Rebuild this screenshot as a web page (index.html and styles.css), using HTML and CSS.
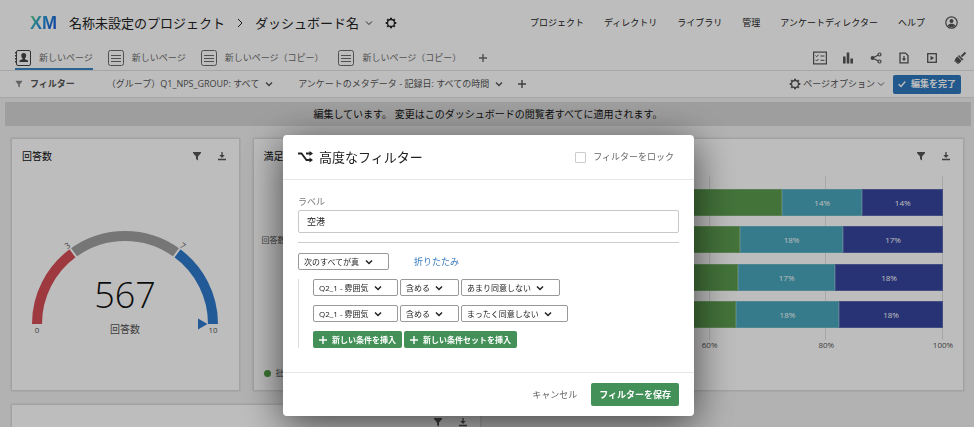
FILE: index.html
```html
<!DOCTYPE html>
<html lang="ja">
<head>
  <meta charset="UTF-8" />
  <meta name="viewport" content="width=device-width, initial-scale=1.0"/>
  <title>ダッシュボード名</title>
  <link rel="stylesheet" href="styles.css">
</head>
<body>
  <!-- shared icons -->
  <svg class="sprite" width="0" height="0">
    <symbol id="chevron" viewBox="0 0 8 8"><path d="M1 2.5l3 3 3-3" fill="none" stroke="currentColor" stroke-width="1.4"/></symbol>
    <symbol id="chevron-thin" viewBox="0 0 8 8"><path d="M1 2.5l3 3 3-3" fill="none" stroke="currentColor" stroke-width=".9"/></symbol>
    <symbol id="plus" viewBox="0 0 8 8"><path d="M4 0v8M0 4h8" stroke="currentColor" stroke-width="1.4"/></symbol>
    <symbol id="funnel" viewBox="0 0 10 10"><path d="M1 1h8v1L6 5.500v4L4 8V5.500L1 2z" fill="currentColor"/></symbol>
    <symbol id="download" viewBox="0 0 10 10"><path d="M5 1v4M1 8.500h8" fill="none" stroke="currentColor" stroke-width="1.3"/><path d="M2.300 4h5.400L5 7z" fill="currentColor"/></symbol>
    <symbol id="page" viewBox="0 0 16 16"><rect x=".5" y=".5" width="15" height="15" rx="2" fill="none" stroke="currentColor"/><path d="M3 5.500h10M3 8.500h10M3 11.500h10" stroke="currentColor"/></symbol>
    <symbol id="gear" viewBox="0 0 12 12">
      <circle cx="6" cy="6" r="3.5" fill="none" stroke="currentColor" stroke-width="1.3"/>
      <path d="M6 .7v1.500M6 9.800v1.500M.7 6h1.500M9.800 6h1.500M2.200 2.200l1.100 1.100M8.700 8.700l1.100 1.100M2.200 9.800l1.100-1.100M8.700 3.300l1.100-1.100" stroke="currentColor" stroke-width="2"/>
    </symbol>
  </svg>

  <header class="topbar">
    <span class="logo">XM</span>
    <span class="crumb">名称未設定のプロジェクト</span>
    <svg class="crumb-sep" viewBox="0 0 6 10"><path d="M1 1l4 4-4 4" fill="none" stroke="currentColor"/></svg>
    <span class="crumb">ダッシュボード名</span>
    <svg class="crumb-arrow icon-small"><use href="#chevron-thin"/></svg>
    <button class="icon-button" aria-label="設定"><svg class="icon-medium"><use href="#gear"/></svg></button>
    <nav class="main-nav">
      <a href="#">プロジェクト</a>
      <a href="#">ディレクトリ</a>
      <a href="#">ライブラリ</a>
      <a href="#">管理</a>
      <a href="#">アンケートディレクター</a>
      <a href="#">ヘルプ</a>
      <a href="#" class="avatar" aria-label="アカウント">
        <svg width="13" height="13" viewBox="0 0 13 13"><circle cx="6.5" cy="6.5" r="5.7" fill="none" stroke="currentColor" stroke-width="1.2"/><circle cx="6.5" cy="5" r="2" fill="currentColor"/><path d="M2.800 9.600c1-2.600 6.400-2.600 7.400 0-1.800 2-5.600 2-7.400 0z" fill="currentColor"/></svg>
      </a>
    </nav>
  </header>

  <div class="tabbar">
    <a href="#" class="tab active">
      <svg class="icon-tab" viewBox="0 0 16 16"><rect x="1.5" y=".5" width="14" height="15" rx="1.5" fill="none" stroke="currentColor"/><path d="M1 2v12" stroke="currentColor" stroke-width="2" stroke-dasharray="1.5 1.5"/><path d="M8.700 3c3.400 0 2.800 4 1.300 5.200v1l3 1.400V12H4.500v-1.400l3-1.400v-1C6 7 5.400 3 8.700 3z" fill="currentColor"/></svg>
      <span>新しいページ</span>
    </a>
    <a href="#" class="tab"><svg class="icon-tab"><use href="#page"/></svg><span>新しいページ</span></a>
    <a href="#" class="tab"><svg class="icon-tab"><use href="#page"/></svg><span>新しいページ（コピー）</span></a>
    <a href="#" class="tab"><svg class="icon-tab"><use href="#page"/></svg><span>新しいページ（コピー）</span></a>
    <button class="icon-button add-tab" aria-label="ページを追加"><svg class="icon-small"><use href="#plus"/></svg></button>
    <div class="tools">
      <button class="icon-button" aria-label="アンケート"><svg viewBox="0 0 14 14"><rect x=".6" y="1.1" width="12.8" height="11.8" fill="none" stroke="currentColor" stroke-width="1.2"/><path d="M2.500 4.500l1.200 1.200L5.500 3.700M2.500 8.800l1.200 1.200L5.500 8M7.500 5h4M7.500 9.300h4" fill="none" stroke="currentColor"/></svg></button>
      <button class="icon-button" aria-label="グラフ"><svg viewBox="0 0 14 14"><path d="M3.300 5.500v7M7 1.500v11M10.700 7.500v5" stroke="currentColor" stroke-width="2.6"/></svg></button>
      <button class="icon-button" aria-label="共有"><svg viewBox="0 0 14 14"><path d="M10.500 3.500l-7 3.500 7 3.500" fill="none" stroke="currentColor" stroke-width="1.2"/><circle cx="3.5" cy="7" r="1.9" fill="currentColor"/><circle cx="10.5" cy="3.5" r="1.5" fill="#fff" stroke="currentColor" stroke-width="1.2"/><circle cx="10.5" cy="10.5" r="1.5" fill="#fff" stroke="currentColor" stroke-width="1.2"/></svg></button>
      <button class="icon-button" aria-label="エクスポート"><svg viewBox="0 0 14 14"><path d="M3 2.100h5.500l2.500 2.500v7.300H3z" fill="none" stroke="currentColor" stroke-width="1.3"/><path d="M7 5v3" stroke="currentColor" stroke-width="1.3"/><path d="M4.800 7.500h4.400L7 10z" fill="currentColor"/></svg></button>
      <button class="icon-button" aria-label="再生"><svg viewBox="0 0 14 14"><rect x="2.7" y="2.7" width="8.6" height="8.6" fill="none" stroke="currentColor" stroke-width="1.3"/><path d="M5.500 4.700L9.200 7 5.500 9.300z" fill="currentColor"/></svg></button>
      <button class="icon-button" aria-label="テーマ"><svg viewBox="0 0 14 14"><path d="M12.500 1.500l-4 4" stroke="currentColor" stroke-width="2"/><path d="M6 4l4.500 4.500-1.500 1L5 5z" fill="currentColor"/><path d="M4.500 5.500l4 4.200C7 12 5.500 12.800 4 13l.7-1.500L2.800 12l.5-1.500-2 .3C2 8.500 2.500 6.500 4.500 5.500z" fill="currentColor"/></svg></button>
    </div>
  </div>

  <div class="filterbar">
    <svg class="filter-icon icon-small"><use href="#funnel"/></svg>
    <strong class="filter-title">フィルター</strong>
    <button class="filter">（グループ）Q1_NPS_GROUP: すべて <svg class="icon-small"><use href="#chevron"/></svg></button>
    <button class="filter">アンケートのメタデータ - 記録日: すべての時間 <svg class="icon-small"><use href="#chevron"/></svg></button>
    <button class="icon-button" aria-label="フィルターを追加"><svg class="icon-small"><use href="#plus"/></svg></button>
    <button class="page-options"><svg class="icon-medium"><use href="#gear"/></svg>ページオプション<svg class="icon-small"><use href="#chevron-thin"/></svg></button>
    <button class="done"><svg class="icon-small" viewBox="0 0 8 8"><path d="M.7 4.300L3 6.500 7.300 1.500" fill="none" stroke="currentColor" stroke-width="1.4"/></svg>編集を完了</button>
  </div>

  <main class="dashboard">
    <p class="banner">編集しています。 変更はこのダッシュボードの閲覧者すべてに適用されます。</p>

    <div class="cards">
      <section class="card">
        <div class="card-head">
          <h2>回答数</h2>
          <button class="icon-button" aria-label="フィルター"><svg><use href="#funnel"/></svg></button>
          <button class="icon-button" aria-label="ダウンロード"><svg><use href="#download"/></svg></button>
        </div>
        <svg class="gauge" viewBox="0 0 200 125" width="200" height="125">
          <path class="arc low" d="M12 104A88 88 0 0 1 48.300 32.800"/>
          <path class="arc mid" d="M48.300 32.800A88 88 0 0 1 151.700 32.800"/>
          <path class="arc high" d="M151.700 32.800A88 88 0 0 1 188 104"/>
          <path class="gap" d="M44 27L52.500 38.500M156 27L147.500 38.500"/>
          <path class="pointer" d="M173 98.500L182.500 104 173 109.500z"/>
          <text class="tick" x="12" y="113">0</text>
          <text class="tick" x="188" y="113">10</text>
          <text class="tick" transform="translate(44 28) rotate(-36)">3</text>
          <text class="tick" transform="translate(156 28) rotate(36)">7</text>
          <text class="value" x="100" y="88">567</text>
          <text class="caption" x="100" y="113">回答数</text>
        </svg>
      </section>

      <section class="card wide">
        <div class="card-head">
          <h2>満足度</h2>
          <button class="icon-button" aria-label="フィルター"><svg><use href="#funnel"/></svg></button>
          <button class="icon-button" aria-label="ダウンロード"><svg><use href="#download"/></svg></button>
        </div>
        <div class="chart">
          <span class="chart-label">回答数</span>
          <div class="plot">
            <div class="grid-lines"><i></i><i></i><i></i><i></i><i></i></div>
            <div class="bars">
              <div class="bar"><span class="green" style="width: 72.4%"></span><span class="teal" style="width: 13.8%">14%</span><span class="navy" style="width: 13.8%">14%</span></div>
              <div class="bar"><span class="green" style="width: 65.2%"></span><span class="teal" style="width: 17.7%">18%</span><span class="navy" style="width: 17.1%">17%</span></div>
              <div class="bar"><span class="green" style="width: 64.9%"></span><span class="teal" style="width: 16.6%">17%</span><span class="navy" style="width: 18.5%">18%</span></div>
              <div class="bar"><span class="green" style="width: 64.5%"></span><span class="teal" style="width: 17.7%">18%</span><span class="navy" style="width: 17.8%">18%</span></div>
            </div>
            <div class="axis"><span></span><span></span><span></span><span>60%</span><span>80%</span><span>100%</span></div>
          </div>
        </div>
        <div class="legend"><i class="dot"></i>批判者</div>
      </section>

      <section class="card half">
        <div class="card-head">
          <button class="icon-button" aria-label="フィルター"><svg><use href="#funnel"/></svg></button>
          <button class="icon-button" aria-label="ダウンロード"><svg><use href="#download"/></svg></button>
        </div>
      </section>
    </div>
  </main>

  <div class="overlay">
    <form class="modal" role="dialog" aria-labelledby="modal-title">
      <div class="modal-head">
        <svg width="15" height="12" viewBox="0 0 15 12"><path d="M0 2.500h3.500l5 6.500h4M8 2.500h4.500" fill="none" stroke="currentColor" stroke-width="1.8"/><path d="M11.500 0L15 2.500l-3.500 2.500zM11.500 6.500L15 9l-3.500 2.500z" fill="currentColor"/></svg>
        <h1 id="modal-title">高度なフィルター</h1>
        <label class="lock"><input type="checkbox">フィルターをロック</label>
      </div>
      <div class="modal-body">
        <label class="field-label" for="filter-label">ラベル</label>
        <input class="field" type="text" id="filter-label" value="空港">
        <hr>
        <div class="set-head">
          <select aria-label="論理条件"><option>次のすべてが真</option></select>
          <a href="#">折りたたみ</a>
        </div>
        <div class="conditions">
          <div class="condition">
            <select aria-label="フィールド"><option>Q2_1 - 雰囲気</option></select>
            <select aria-label="演算子"><option>含める</option></select>
            <select aria-label="値"><option>あまり同意しない</option></select>
          </div>
          <div class="condition">
            <select aria-label="フィールド"><option>Q2_1 - 雰囲気</option></select>
            <select aria-label="演算子"><option>含める</option></select>
            <select aria-label="値"><option>まったく同意しない</option></select>
          </div>
          <div class="condition">
            <button type="button" class="insert"><svg class="icon-small"><use href="#plus"/></svg>新しい条件を挿入</button>
            <button type="button" class="insert"><svg class="icon-small"><use href="#plus"/></svg>新しい条件セットを挿入</button>
          </div>
        </div>
      </div>
      <div class="modal-foot">
        <button type="button" class="cancel">キャンセル</button>
        <button type="button" class="save">フィルターを保存</button>
      </div>
    </form>
  </div>
</body>
</html>
```
FILE: styles.css
```css
* {
  box-sizing: border-box;
}

body {
  display: flex;
  flex-direction: column;
  margin: 0;
  height: 100vh;
  overflow: hidden;
  background: #f1f1f1;
  color: #222;
  font-family: "Open Sans", "Noto Sans CJK JP", sans-serif;
  font-size: 9px;
  line-height: 14px;
}

h1, h2, p {
  margin: 0;
  font-weight: 400;
}

a {
  color: inherit;
  text-decoration: none;
}

button, input, select {
  margin: 0;
  font: inherit;
  color: inherit;
}

button {
  display: flex;
  align-items: center;
  padding: 0;
  border: 0;
  background: none;
  white-space: nowrap;
}

svg {
  flex: none;
}

.sprite {
  position: absolute;
}

.icon-small {
  width: 8px;
  height: 8px;
}

.icon-medium {
  width: 12px;
  height: 12px;
}

/* header */
.topbar {
  display: flex;
  flex: none;
  align-items: center;
  height: 45px;
  padding: 0 16px 0 30px;
  background: #fff;
  white-space: nowrap;
}

.logo {
  margin-right: 12px;
  font: 700 18px/20px "Liberation Sans", sans-serif;
  background: linear-gradient(125deg, #5fd08c 10%, #2d9ad8 40%, #1458d8 85%);
  -webkit-background-clip: text;
  background-clip: text;
  color: transparent;
}

.crumb {
  font-size: 13px;
  line-height: 20px;
}

.crumb-sep {
  width: 6px;
  height: 10px;
  margin: 0 12px;
}

.crumb-arrow {
  margin: 0 12px 0 6px;
}

.main-nav {
  display: flex;
  align-items: center;
  gap: 20px;
  margin-left: auto;
}

.avatar {
  display: flex;
  color: #555;
}

/* page tabs */
.tabbar {
  display: flex;
  flex: none;
  gap: 15px;
  height: 26px;
  padding: 0 7px 0 15px;
  border-bottom: 1px solid #e2e2e2;
  background: #fff;
  color: #6c6c6c;
  white-space: nowrap;
}

.tab {
  display: flex;
  align-items: center;
  gap: 8px;
  padding-top: 2px;
  border-bottom: 2px solid transparent;
}

.tab.active {
  border-color: #3b85c6;
}

.icon-tab {
  width: 16px;
  height: 16px;
}

.tab.active .icon-tab {
  color: #444;
}

.add-tab {
  margin-left: 3px;
}

.tools {
  display: flex;
  gap: 14px;
  margin-left: auto;
  color: #555;
}

.tools svg {
  width: 14px;
  height: 14px;
}

/* filters */
.filterbar {
  display: flex;
  flex: none;
  align-items: center;
  height: 27px;
  padding: 0 13px 0 15px;
  border-bottom: 1px solid #e2e2e2;
  background: #fff;
  color: #555;
  white-space: nowrap;
}

.filter-icon {
  margin-right: 7px;
  color: #888;
}

.filter-title {
  margin-right: 32px;
}

.filter {
  gap: 6px;
  margin-right: 25px;
}

.filter + .filter {
  margin-right: 15px;
}

.page-options {
  gap: 2px;
  margin-left: auto;
}

.done {
  gap: 5px;
  height: 19px;
  margin-left: 8px;
  padding: 0 5px;
  border-radius: 2px;
  background: #2e78bd;
  color: #fff;
  font-weight: 700;
}

/* dashboard */
.dashboard {
  flex: 1;
  min-height: 0;
  display: flex;
  flex-direction: column;
}

.banner {
  margin: 4px 3px 12px 5px;
  padding: 5px;
  background: #d6d6d6;
  color: #111;
  font-size: 10px;
  text-align: center;
}

.cards {
  flex: 1;
  display: grid;
  grid-template-columns: repeat(4, 1fr);
  grid-template-rows: 253px 1fr;
  gap: 13px;
  min-height: 0;
  padding: 0 10px 0 11px;
}

.card {
  min-height: 0;
  border: 1px solid #dcdcdc;
  background: #fff;
  box-shadow: 0 0 2px #ccc;
  overflow: hidden;
}

.wide {
  grid-column: span 3;
}

.half {
  grid-column: span 2;
  border-bottom: 0;
}

.card-head {
  display: flex;
  align-items: center;
  justify-content: flex-end;
  gap: 15px;
  height: 34px;
  padding: 0 12px 0 10px;
  color: #555;
}

.half .card-head {
  height: auto;
  padding-top: 12px;
}

.card-head h2 {
  margin-right: auto;
  color: #111;
  font-size: 10px;
}

.card-head svg {
  width: 10px;
  height: 10px;
}

.gauge {
  display: block;
  margin: 47px auto 0;
}

.arc {
  fill: none;
  stroke-width: 10;
}

.low {
  stroke: #d54d57;
}

.mid {
  stroke: #9f9f9f;
}

.high {
  stroke: #2d7acc;
}

.pointer {
  fill: #2d7acc;
}

.gap {
  stroke: #fff;
  stroke-width: 2;
}

.gauge text {
  text-anchor: middle;
}

.tick {
  fill: #555;
  font-size: 8px;
}

.value {
  fill: #111;
  font-size: 36px;
  font-weight: 300;
}

.caption {
  fill: #555;
  font-size: 10px;
}

.chart {
  display: flex;
  padding: 3px 20px 0 8px;
}

.chart-label {
  width: 98px;
  margin-top: 57px;
  color: #555;
  font-size: 8px;
}

.plot {
  position: relative;
  flex: 1;
}

.grid-lines {
  position: absolute;
  inset: 0 0 12px;
  display: flex;
}

.grid-lines i {
  flex: 1;
  border-right: 1px solid #e0e0e0;
}

.bars {
  position: relative;
  display: flex;
  flex-direction: column;
  justify-content: space-between;
  height: 152px;
  padding-top: 13px;
}

.bar {
  display: flex;
  height: 27px;
}

.bar span {
  border: 1px solid rgba(255, 255, 255, 0.2);
  color: #fff;
  font-size: 8px;
  line-height: 25px;
  text-align: center;
}

.green {
  background: #5b9b4e;
}

.teal {
  background: #48a6bc;
}

.navy {
  background: #35459e;
}

.axis {
  display: flex;
  margin: 10px -10% 0;
  color: #555;
  font-size: 8px;
}

.axis span {
  flex: 1;
  text-align: center;
}

.legend {
  display: flex;
  align-items: center;
  gap: 5px;
  margin: 14px 10px 0;
  color: #555;
  font-size: 8px;
}

.dot {
  width: 7px;
  height: 7px;
  border-radius: 50%;
  background: #4f9e43;
}

/* modal */
.overlay {
  position: fixed;
  inset: 0;
  display: flex;
  align-items: flex-start;
  justify-content: center;
  padding: 135px 0 0 3px;
  background: rgba(0, 0, 0, 0.26);
}

.modal {
  width: 411px;
  border-radius: 4px;
  background: #fff;
  box-shadow: 0 8px 40px rgba(0, 0, 0, 0.65);
}

.modal-head {
  display: flex;
  align-items: center;
  height: 45px;
  padding: 0 20px 0 15px;
  border-bottom: 1px solid #e6e6e6;
}

.modal-head h1 {
  margin-left: 6px;
  font-size: 13px;
}

.lock {
  display: flex;
  align-items: center;
  gap: 7px;
  margin-left: auto;
  color: #666;
}

.lock input {
  appearance: none;
  width: 11px;
  height: 11px;
  border: 1px solid #ccc;
  border-radius: 1px;
}

.modal-body {
  padding: 15px 15px 24px;
}

.field-label {
  display: block;
  color: #777;
}

.field {
  display: block;
  width: 100%;
  height: 23px;
  margin-top: 1px;
  padding: 0 8px;
  border: 1px solid #c8c8c8;
  border-radius: 2px;
}

hr {
  margin: 9px 0 10px;
  border: 0;
  border-top: 1px solid #ccc;
}

.set-head {
  display: flex;
  align-items: center;
  gap: 25px;
}

.set-head a {
  color: #3a7bbf;
}

select {
  appearance: none;
  height: 17px;
  padding: 0 28px 0 5px;
  border: 1px solid #999;
  border-radius: 2px;
  background: #fff url("data:image/svg+xml,%3Csvg xmlns='http://www.w3.org/2000/svg' viewBox='0 0 8 8'%3E%3Cpath d='M1 2.5l3 3 3-3' fill='none' stroke='%23222' stroke-width='1.5'/%3E%3C/svg%3E") no-repeat right 15px center / 8px 8px;
  font-size: 8px;
}

.conditions {
  display: flex;
  flex-direction: column;
  gap: 9px;
  margin-top: 9px;
  padding-left: 14px;
  border-left: 1px solid #ddd;
}

.condition {
  display: flex;
  gap: 2px;
}

.insert {
  gap: 5px;
  height: 17px;
  padding: 0 6px;
  border-radius: 2px;
  background: #439158;
  color: #fff;
  font-size: 8px;
  font-weight: 700;
}

.modal-foot {
  display: flex;
  align-items: center;
  justify-content: flex-end;
  gap: 14px;
  height: 44px;
  padding: 0 15px;
  border-top: 1px solid #e6e6e6;
}

.cancel {
  color: #666;
}

.save {
  height: 23px;
  padding: 0 8px;
  border-radius: 2px;
  background: #439158;
  color: #fff;
  font-weight: 700;
}
```
